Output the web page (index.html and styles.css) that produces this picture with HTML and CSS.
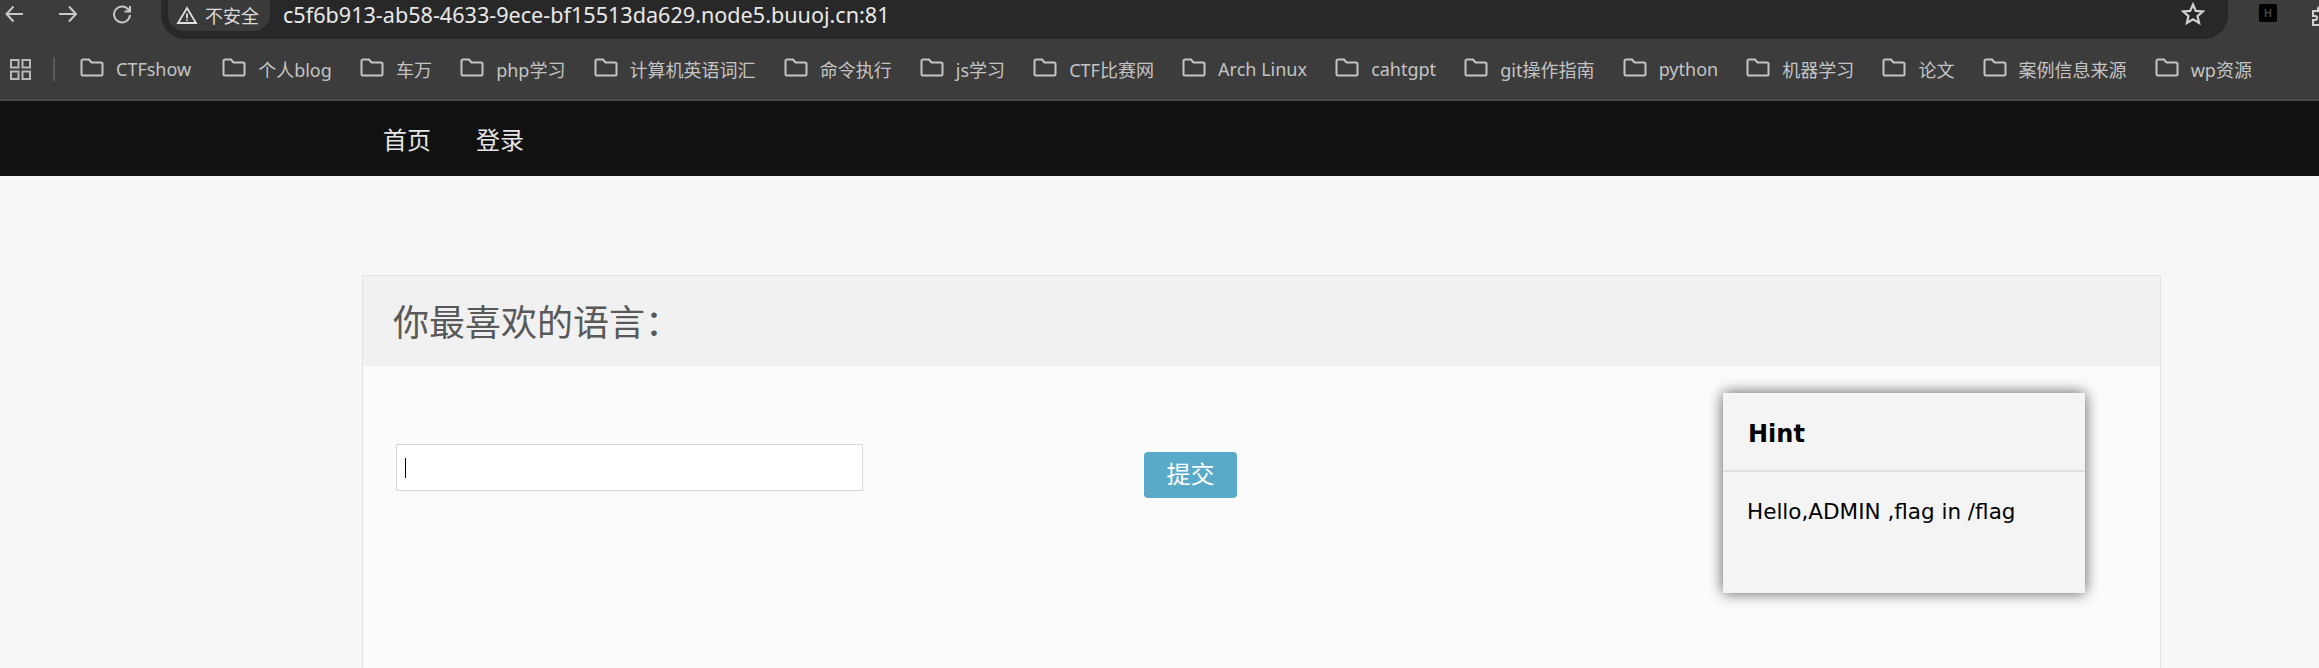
FILE: index.html
```html
<!DOCTYPE html>
<html>
<head>
  <meta charset="utf-8"/>
  <title>Hint</title>
  <link rel="stylesheet" href="styles.css">
</head>
<body>

<div class="toolbar">
  <svg class="navIcon" width="20" height="20" viewBox="0 0 20 20"><path d="M19 10H2.500M9.500 2.500L2.500 10l7 7.500"/></svg>
  <svg class="navIcon" width="20" height="20" viewBox="0 0 20 20"><path d="M1 10h17M11 2.500l7 7.500-7 7.500"/></svg>
  <svg class="navIcon" width="20" height="20" viewBox="0 0 20 20"><path d="M17 6.500A8 8 0 1 0 18 11M18 2v5.500h-5.500"/></svg>
  <div class="addressBar">
    <div class="security">
      <svg width="22" height="20" viewBox="0 0 22 20"><path d="M11 3l9 15H2zM11 8.500v5M11 14.500v1.500"/></svg>
      <span>不安全</span>
    </div>
    <span class="url">c5f6b913-ab58-4633-9ece-bf15513da629.node5.buuoj.cn:81</span>
    <svg class="star" width="24" height="24" viewBox="0 0 24 24"><path d="M12 2.500l2.800 6.400 6.900.6-5.200 4.600 1.600 6.800-6.100-3.600-6.100 3.600 1.600-6.800-5.200-4.600 6.900-.6z"/></svg>
  </div>
  <div class="extH">H</div>
  <svg class="extPuzzle" width="20" height="20" viewBox="0 0 20 20"><path d="M2 5h5V3a2 2 0 0 1 4 0v2h5v5h2a2 2 0 0 1 0 4h-2v5H2v-5h2a2 2 0 0 0 0-4H2z"/></svg>
</div>

<div class="bookmarks">
  <svg class="apps" width="21" height="21" viewBox="0 0 21 21"><path d="M1 1h7.500v7.500H1zM12.500 1H20v7.500h-7.500zM1 12.500h7.500V20H1zM12.500 12.500H20V20h-7.500z"/></svg>
  <div class="divider"></div>
  <div class="bookmark"><svg class="folder" viewBox="0 0 24 20"><path d="M1.500 3a1.500 1.500 0 0 1 1.500-1.500h6l2.500 3H21a1.500 1.500 0 0 1 1.500 1.500v10a1.500 1.500 0 0 1-1.500 1.500H3A1.500 1.500 0 0 1 1.500 16z"/></svg>CTFshow</div>
  <div class="bookmark"><svg class="folder" viewBox="0 0 24 20"><path d="M1.500 3a1.500 1.500 0 0 1 1.500-1.500h6l2.500 3H21a1.500 1.500 0 0 1 1.500 1.500v10a1.500 1.500 0 0 1-1.500 1.500H3A1.500 1.500 0 0 1 1.500 16z"/></svg>个人blog</div>
  <div class="bookmark"><svg class="folder" viewBox="0 0 24 20"><path d="M1.500 3a1.500 1.500 0 0 1 1.500-1.500h6l2.500 3H21a1.500 1.500 0 0 1 1.500 1.500v10a1.500 1.500 0 0 1-1.500 1.500H3A1.500 1.500 0 0 1 1.500 16z"/></svg>车万</div>
  <div class="bookmark"><svg class="folder" viewBox="0 0 24 20"><path d="M1.500 3a1.500 1.500 0 0 1 1.500-1.500h6l2.500 3H21a1.500 1.500 0 0 1 1.500 1.500v10a1.500 1.500 0 0 1-1.500 1.500H3A1.500 1.500 0 0 1 1.500 16z"/></svg>php学习</div>
  <div class="bookmark"><svg class="folder" viewBox="0 0 24 20"><path d="M1.500 3a1.500 1.500 0 0 1 1.500-1.500h6l2.500 3H21a1.500 1.500 0 0 1 1.500 1.500v10a1.500 1.500 0 0 1-1.500 1.500H3A1.500 1.500 0 0 1 1.500 16z"/></svg>计算机英语词汇</div>
  <div class="bookmark"><svg class="folder" viewBox="0 0 24 20"><path d="M1.500 3a1.500 1.500 0 0 1 1.500-1.500h6l2.500 3H21a1.500 1.500 0 0 1 1.500 1.500v10a1.500 1.500 0 0 1-1.500 1.500H3A1.500 1.500 0 0 1 1.500 16z"/></svg>命令执行</div>
  <div class="bookmark"><svg class="folder" viewBox="0 0 24 20"><path d="M1.500 3a1.500 1.500 0 0 1 1.500-1.500h6l2.500 3H21a1.500 1.500 0 0 1 1.500 1.500v10a1.500 1.500 0 0 1-1.500 1.500H3A1.500 1.500 0 0 1 1.500 16z"/></svg>js学习</div>
  <div class="bookmark"><svg class="folder" viewBox="0 0 24 20"><path d="M1.500 3a1.500 1.500 0 0 1 1.500-1.500h6l2.500 3H21a1.500 1.500 0 0 1 1.500 1.500v10a1.500 1.500 0 0 1-1.500 1.500H3A1.500 1.500 0 0 1 1.500 16z"/></svg>CTF比赛网</div>
  <div class="bookmark"><svg class="folder" viewBox="0 0 24 20"><path d="M1.500 3a1.500 1.500 0 0 1 1.500-1.500h6l2.500 3H21a1.500 1.500 0 0 1 1.500 1.500v10a1.500 1.500 0 0 1-1.500 1.500H3A1.500 1.500 0 0 1 1.500 16z"/></svg>Arch Linux</div>
  <div class="bookmark"><svg class="folder" viewBox="0 0 24 20"><path d="M1.500 3a1.500 1.500 0 0 1 1.500-1.500h6l2.500 3H21a1.500 1.500 0 0 1 1.500 1.500v10a1.500 1.500 0 0 1-1.500 1.500H3A1.500 1.500 0 0 1 1.500 16z"/></svg>cahtgpt</div>
  <div class="bookmark"><svg class="folder" viewBox="0 0 24 20"><path d="M1.500 3a1.500 1.500 0 0 1 1.500-1.500h6l2.500 3H21a1.500 1.500 0 0 1 1.500 1.500v10a1.500 1.500 0 0 1-1.500 1.500H3A1.500 1.500 0 0 1 1.500 16z"/></svg>git操作指南</div>
  <div class="bookmark"><svg class="folder" viewBox="0 0 24 20"><path d="M1.500 3a1.500 1.500 0 0 1 1.500-1.500h6l2.500 3H21a1.500 1.500 0 0 1 1.500 1.500v10a1.500 1.500 0 0 1-1.500 1.500H3A1.500 1.500 0 0 1 1.500 16z"/></svg>python</div>
  <div class="bookmark"><svg class="folder" viewBox="0 0 24 20"><path d="M1.500 3a1.500 1.500 0 0 1 1.500-1.500h6l2.500 3H21a1.500 1.500 0 0 1 1.500 1.500v10a1.500 1.500 0 0 1-1.500 1.500H3A1.500 1.500 0 0 1 1.500 16z"/></svg>机器学习</div>
  <div class="bookmark"><svg class="folder" viewBox="0 0 24 20"><path d="M1.500 3a1.500 1.500 0 0 1 1.500-1.500h6l2.500 3H21a1.500 1.500 0 0 1 1.500 1.500v10a1.500 1.500 0 0 1-1.500 1.500H3A1.500 1.500 0 0 1 1.500 16z"/></svg>论文</div>
  <div class="bookmark"><svg class="folder" viewBox="0 0 24 20"><path d="M1.500 3a1.500 1.500 0 0 1 1.500-1.500h6l2.500 3H21a1.500 1.500 0 0 1 1.500 1.500v10a1.500 1.500 0 0 1-1.500 1.500H3A1.500 1.500 0 0 1 1.500 16z"/></svg>案例信息来源</div>
  <div class="bookmark"><svg class="folder" viewBox="0 0 24 20"><path d="M1.500 3a1.500 1.500 0 0 1 1.500-1.500h6l2.500 3H21a1.500 1.500 0 0 1 1.500 1.500v10a1.500 1.500 0 0 1-1.500 1.500H3A1.500 1.500 0 0 1 1.500 16z"/></svg>wp资源</div>
</div>

<nav class="siteNav">
  <a href="#">首页</a>
  <a href="#">登录</a>
</nav>

<main class="page">
  <section class="panel">
    <h1 class="panelTitle">你最喜欢的语言：</h1>
    <div class="panelBody">
      <form class="langForm">
        <div class="textBox"><span class="caret"></span></div>
        <button class="submit" type="submit">提交</button>
      </form>
      <aside class="hint">
        <h2 class="hintTitle">Hint</h2>
        <p class="hintText">Hello,ADMIN ,flag in /flag</p>
      </aside>
    </div>
  </section>
</main>

</body>
</html>
```

FILE: styles.css
```css
html, body {
  margin: 0;
  height: 668px;
  overflow: hidden;
}
body {
  background-color: #f6f7f9;
  font-family: "Noto Sans", "Noto Sans CJK SC", sans-serif;
}
.toolbar {
  height: 39px;
  background-color: #3c3c3c;
  display: flex;
  align-items: flex-start;
  padding-left: 4px;
  overflow: hidden;
}
.navIcon {
  flex: none;
  fill: none;
  stroke: #c8c8c8;
  stroke-width: 2;
  margin-top: 4px;
  margin-right: 34px;
}
.addressBar {
  flex: none;
  width: 2067px;
  height: 39px;
  margin-left: -5px;
  background-color: #282828;
  border-radius: 0 0 24px 24px;
  display: flex;
  align-items: center;
  box-sizing: border-box;
  padding: 0 23px 10px 7px;
}
.security {
  flex: none;
  width: 102px;
  height: 33px;
  box-sizing: border-box;
  padding-left: 8px;
  border-radius: 0 0 16px 16px;
  background-color: #3a3a3a;
  color: #dcdcdc;
  font-size: 18px;
  display: flex;
  align-items: center;
  gap: 7px;
}
.security svg {
  fill: none;
  stroke: #e0e0e0;
  stroke-width: 1.800;
}
.url {
  margin-left: 13px;
  color: #e8e8e8;
  font-size: 21.600px;
  flex: 1;
}
.star {
  flex: none;
  margin-top: -2px;
  fill: none;
  stroke: #d0d0d0;
  stroke-width: 2.200;
}
.extH {
  flex: none;
  width: 18px;
  height: 18px;
  margin: 4px 0 0 31px;
  border-radius: 2px;
  background-color: #000;
  color: #444;
  font-size: 11px;
  font-weight: bold;
  line-height: 18px;
  text-align: center;
}
.extPuzzle {
  flex: none;
  fill: none;
  stroke: #d0d0d0;
  stroke-width: 2;
  margin: 6px 0 0 34px;
}
.bookmarks {
  height: 60px;
  background-color: #3c3c3c;
  border-bottom: 2px solid #4a4a4a;
  display: flex;
  align-items: center;
  padding-left: 10px;
  color: #c4c4c4;
  font-size: 18px;
}
.apps {
  flex: none;
  fill: none;
  stroke: #b8b8b8;
  stroke-width: 2;
}
.divider {
  width: 2px;
  height: 24px;
  margin: 0 25px 0 22px;
  background-color: #5a5a5a;
}
.bookmark {
  display: flex;
  align-items: center;
  margin-right: 28.150px;
  white-space: nowrap;
}
.divider + .bookmark {
  margin-right: 31px;
}
.folder {
  width: 24px;
  height: 20px;
  margin: -2px 12px 0 0;
  fill: none;
  stroke: #c4c4c4;
  stroke-width: 2;
}
.siteNav {
  height: 75px;
  background-color: #111;
  display: flex;
  align-items: center;
  padding-left: 383px;
  gap: 45px;
}
.siteNav a {
  color: #e6e6e6;
  font-size: 24px;
  text-decoration: none;
}
.page {
  padding: 99px 158px 0 362px;
}
.panel {
  height: 400px;
  border: 1px solid #e3e3e3;
  border-bottom: 0;
  background-color: #fcfcfc;
}
.panelTitle {
  margin: 0;
  height: 90px;
  padding-left: 30px;
  background-color: #f1f1f1;
  color: #595959;
  font-size: 36px;
  font-weight: normal;
  line-height: 94px;
}
.panelBody {
  display: flex;
  align-items: flex-start;
  padding: 27px 75px 0 33px;
}
.langForm {
  display: flex;
  align-items: flex-start;
  flex: 1;
  padding-top: 51px;
}
.textBox {
  width: 467px;
  height: 47px;
  box-sizing: border-box;
  border: 1px solid #d8d8d8;
  background-color: #fff;
  display: flex;
  align-items: center;
  padding-left: 8px;
}
.caret {
  width: 1px;
  height: 20px;
  background-color: #000;
}
.submit {
  width: 93px;
  height: 46px;
  margin: 8px 0 0 281px;
  border: 0;
  border-radius: 4px;
  background-color: #58aac8;
  color: #fff;
  font-family: inherit;
  font-size: 24px;
  line-height: 42px;
  padding: 0 0 3px;
}
.hint {
  width: 362px;
  height: 200px;
  background-color: #f4f4f4;
  box-shadow: 0 0 14px rgba(0, 0, 0, 0.65);
}
.hintTitle {
  margin: 0;
  height: 79px;
  box-sizing: border-box;
  padding-left: 25px;
  border-bottom: 2px solid #e0e0e0;
  color: #000;
  font-family: "DejaVu Sans", sans-serif;
  font-size: 24px;
  line-height: 83px;
}
.hintText {
  margin: 0;
  padding: 27px 0 0 24px;
  color: #000;
  font-family: "DejaVu Sans", sans-serif;
  font-size: 21.500px;
}
```
